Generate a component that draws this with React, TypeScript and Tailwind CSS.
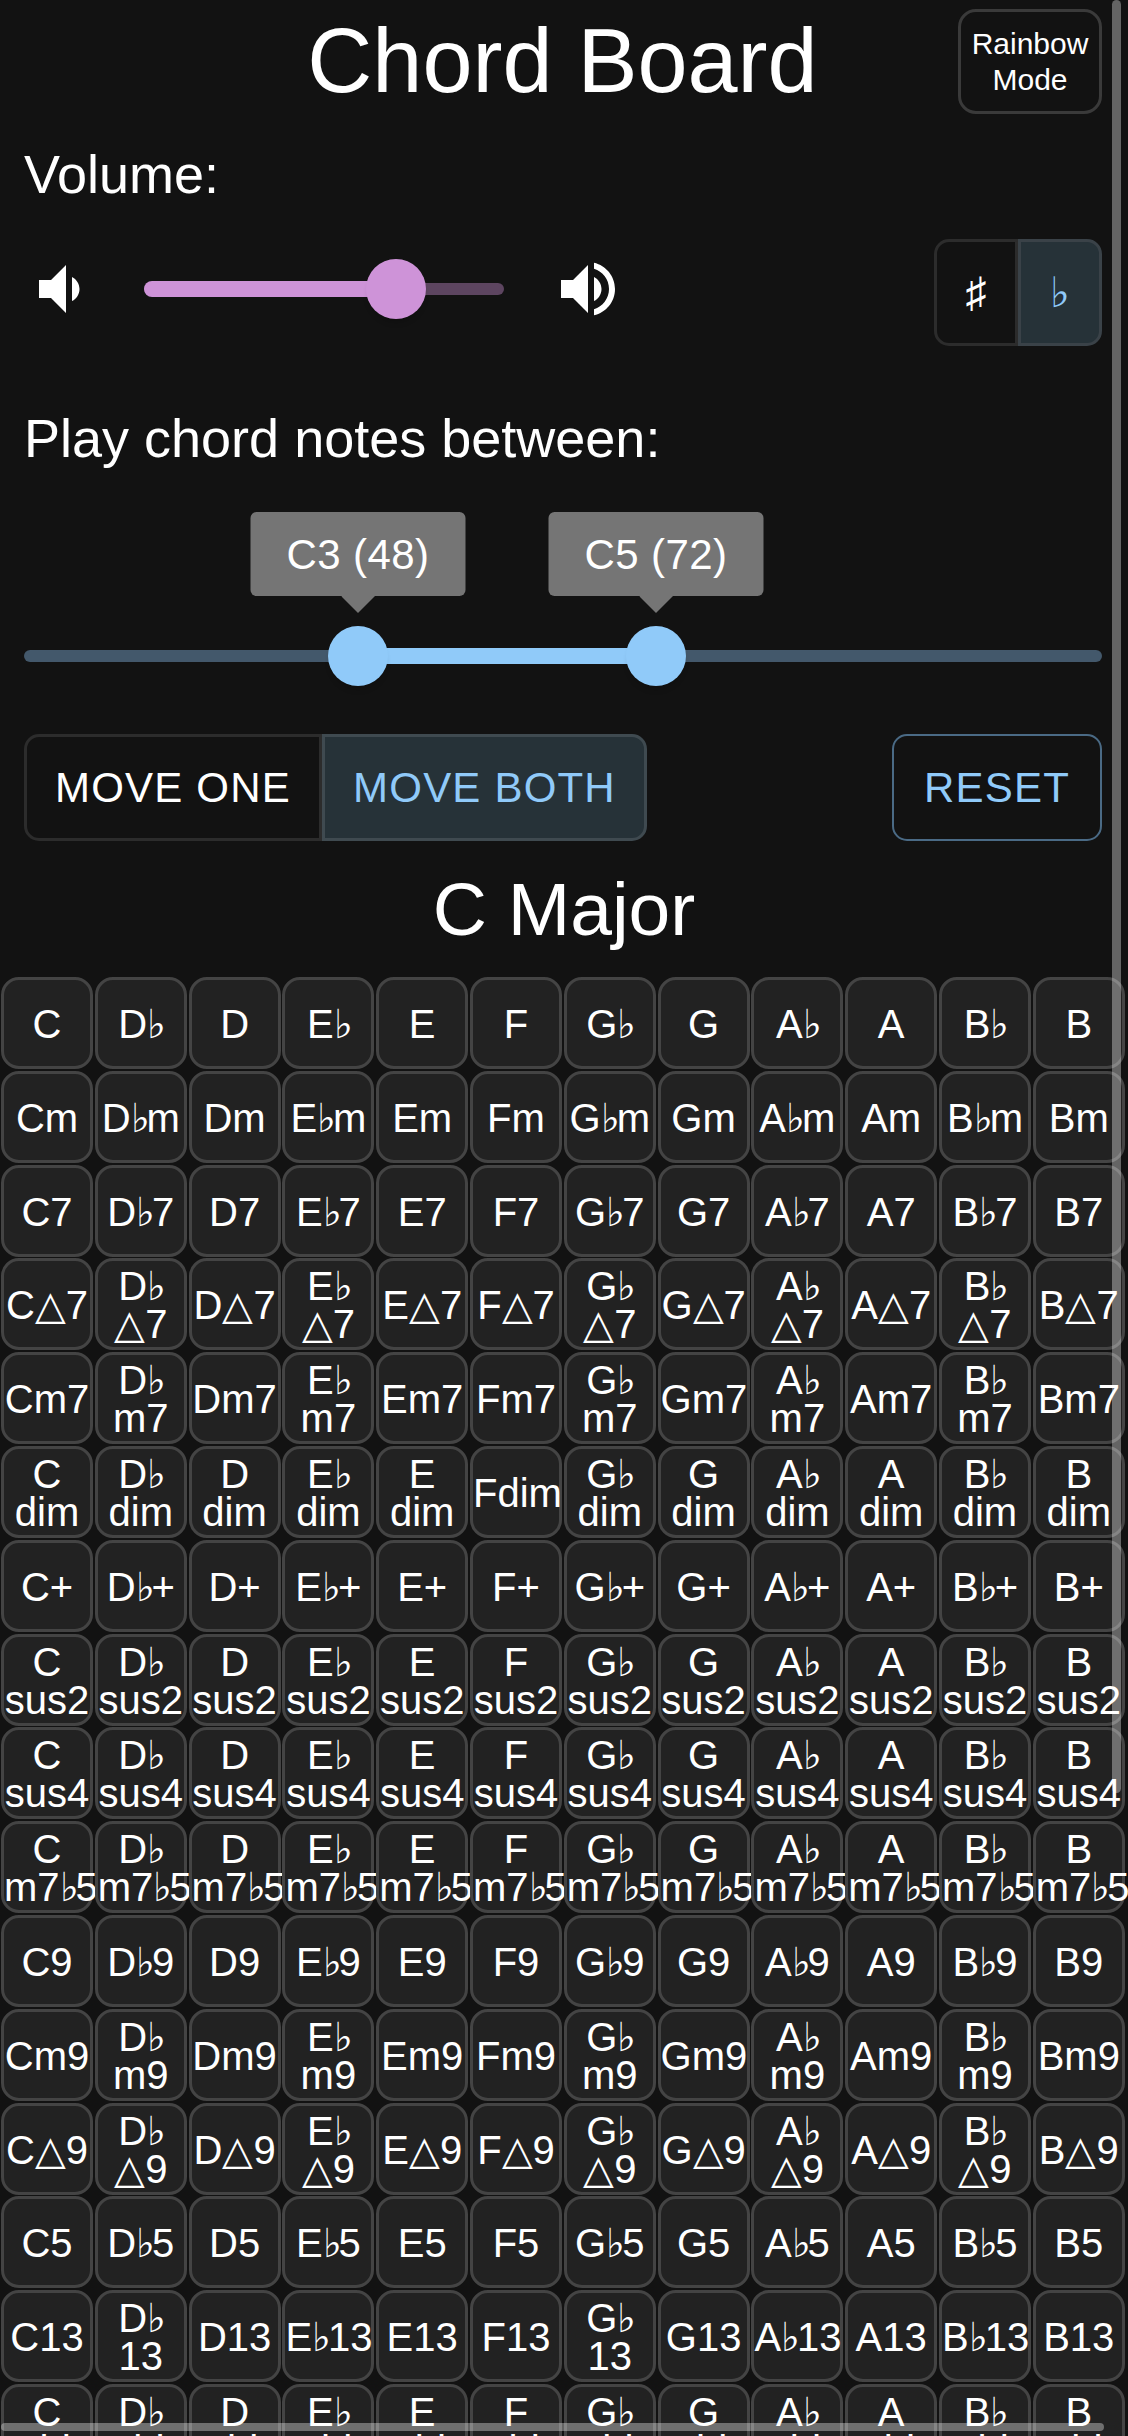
const FLAT = "\u266D";
const SHARP = "\u266F";
const TRI = "\u25B3";

const ROOTS = ["C", `D${FLAT}`, "D", `E${FLAT}`, "E", "F", `G${FLAT}`, "G", `A${FLAT}`, "A", `B${FLAT}`, "B"];

// wrap: which roots push the suffix onto a second line
type Wrap = "none" | "flats" | "all" | "dim" | "thirteen";
const ROWS: { suffix: string; wrap: Wrap }[] = [
  { suffix: "", wrap: "none" },
  { suffix: "m", wrap: "none" },
  { suffix: "7", wrap: "none" },
  { suffix: `${TRI}7`, wrap: "flats" },
  { suffix: "m7", wrap: "flats" },
  { suffix: "dim", wrap: "dim" },
  { suffix: "+", wrap: "none" },
  { suffix: "sus2", wrap: "all" },
  { suffix: "sus4", wrap: "all" },
  { suffix: `m7${FLAT}5`, wrap: "all" },
  { suffix: "9", wrap: "none" },
  { suffix: "m9", wrap: "flats" },
  { suffix: `${TRI}9`, wrap: "flats" },
  { suffix: "5", wrap: "none" },
  { suffix: "13", wrap: "thirteen" },
  { suffix: "add9", wrap: "all" },
];

function shouldWrap(root: string, wrap: Wrap) {
  if (wrap === "all") return true;
  if (wrap === "flats") return root.length > 1;
  if (wrap === "dim") return root !== "F";
  if (wrap === "thirteen") return root === `D${FLAT}` || root === `G${FLAT}`;
  return false;
}

// the fallback flat glyph runs wide, pull the next character back in
function ChordText({ text }: { text: string }) {
  const parts = text.split(FLAT);
  return (
    <>
      {parts.map((part, i) => (
        <span key={i}>
          {i > 0 && <span className="-mr-[3px]">{FLAT}</span>}
          {part}
        </span>
      ))}
    </>
  );
}

function ChordTile({ root, suffix, wrap }: { root: string; suffix: string; wrap: Wrap }) {
  return (
    <button className="flex h-[92px] w-[92px] items-center rounded-[18px] border-[3px] border-[#444444] bg-[#222222] pt-[2px] text-[40px] leading-[38px] text-white">
      <span className="block w-full whitespace-nowrap text-center">
        {shouldWrap(root, wrap) ? (
          <>
            <ChordText text={root} />
            <br />
            <ChordText text={suffix} />
          </>
        ) : (
          <ChordText text={root + suffix} />
        )}
      </span>
    </button>
  );
}

function VolumeDownIcon() {
  return (
    <svg viewBox="0 0 24 24" className="h-[72px] w-[72px] fill-white">
      <path d="M18.5 12c0-1.77-1.02-3.29-2.5-4.03v8.05c1.48-.73 2.5-2.25 2.5-4.02zM5 9v6h4l5 5V4L9 9H5z" />
    </svg>
  );
}

function VolumeUpIcon() {
  return (
    <svg viewBox="0 0 24 24" className="h-[72px] w-[72px] fill-white">
      <path d="M3 9v6h4l5 5V4L7 9H3zm13.5 3c0-1.77-1.02-3.29-2.5-4.03v8.05c1.48-.73 2.5-2.25 2.5-4.02zM14 3.23v2.06c2.89.86 5 3.54 5 6.71s-2.11 5.85-5 6.71v2.06c4.01-.91 7-4.49 7-8.77s-2.99-7.86-7-8.77z" />
    </svg>
  );
}

function Tooltip({ label }: { label: string }) {
  return (
    <div className="absolute bottom-[73px] left-1/2 -translate-x-1/2">
      <div className="flex h-[84px] w-[215px] items-center justify-center rounded-[6px] bg-[#757575] text-[42px] tracking-[0.4px] text-white">
        {label}
      </div>
      <div className="mx-auto h-[17px] w-[34px] bg-[#757575] [clip-path:polygon(0_0,100%_0,50%_100%)]" />
    </div>
  );
}

export default function App() {
  return (
    <div className="relative h-[2436px] w-[1128px] overflow-hidden bg-[#121212] font-['Liberation_Sans',Arial,sans-serif] text-white">
      <header className="grid h-[123px] grid-cols-[1fr_auto_1fr]">
        <div />
        <h1 className="pr-[3px] text-[90px] leading-[123px]">Chord Board</h1>
        <button className="mr-[26px] mt-[9px] h-[105px] w-[144px] justify-self-end rounded-[18px] border-[3px] border-[#3a3a3a] text-[30px] leading-[36px]">
          Rainbow
          <br />
          Mode
        </button>
      </header>

      <section className="px-6">
        <p className="mt-[20px] text-[54px] leading-[62px]">Volume:</p>
        <div className="mt-[26px] flex items-center justify-between">
          <div className="flex h-[72px] w-[600px] items-center">
            <VolumeDownIcon />
            <div className="relative mx-12 h-[60px] w-[360px]">
              <div className="absolute left-0 right-0 top-[24px] h-[12px] rounded-full bg-[#5d4560]" />
              <div className="absolute left-0 top-[22px] h-[16px] w-[252px] rounded-full bg-[#ce93d8]" />
              <div className="absolute left-[222px] top-0 h-[60px] w-[60px] rounded-full bg-[#ce93d8] shadow-[0_6px_6px_-3px_rgba(0,0,0,0.2)]" />
            </div>
            <VolumeUpIcon />
          </div>
          <div className="mr-[2px] mt-[8px] flex h-[107px] w-[168px]">
            <button className="flex-1 rounded-l-[15px] border-[3px] border-[#2c2c2c] text-[42px]">{SHARP}</button>
            <button className="flex-1 rounded-r-[15px] border-[3px] border-[#3a4248] bg-[#263238] text-[42px] text-[#90caf9]">
              {FLAT}
            </button>
          </div>
        </div>
      </section>

      <section className="px-6">
        <p className="mt-[61px] text-[54px] leading-[62px]">Play chord notes between:</p>
        <div className="relative mr-[2px] mt-[157px] h-[60px]">
          <div className="absolute left-0 right-0 top-[24px] h-[12px] rounded-full bg-[#43586b]" />
          <div className="absolute left-[334px] top-[22px] h-[16px] w-[298px] bg-[#90caf9]" />
          <div className="absolute left-[304px] top-0 h-[60px] w-[60px] rounded-full bg-[#90caf9] shadow-[0_6px_6px_-3px_rgba(0,0,0,0.2)]">
            <Tooltip label="C3 (48)" />
          </div>
          <div className="absolute left-[602px] top-0 h-[60px] w-[60px] rounded-full bg-[#90caf9] shadow-[0_6px_6px_-3px_rgba(0,0,0,0.2)]">
            <Tooltip label="C5 (72)" />
          </div>
        </div>
        <div className="mr-[2px] mt-[48px] flex h-[107px] items-stretch justify-between">
          <div className="flex">
            <button className="w-[298px] rounded-l-[15px] border-[3px] border-[#2c2c2c] text-[42px] tracking-[1.2px]">MOVE ONE</button>
            <button className="w-[325px] rounded-r-[15px] border-[3px] border-[#3f4a50] bg-[#263238] text-[42px] tracking-[1.2px] text-[#90caf9]">
              MOVE BOTH
            </button>
          </div>
          <button className="w-[210px] rounded-[15px] border-2 border-[#4a6a85] text-[42px] tracking-[1.2px] text-[#90caf9]">RESET</button>
        </div>
      </section>

      <h2 className="mt-[24px] text-center text-[75px] leading-[88px]">C Major</h2>

      <div className="ml-px mt-[24px] grid grid-cols-[repeat(12,92px)] gap-[1.8px]">
        {ROWS.map((row) =>
          ROOTS.map((root) => <ChordTile key={root + row.suffix} root={root} suffix={row.suffix} wrap={row.wrap} />),
        )}
      </div>

      {/* overlay scrollbars */}
      <div className="pointer-events-none absolute right-[7px] top-0 h-[1793px] w-[9px] rounded-full bg-white/35" />
      <div className="pointer-events-none absolute bottom-[5px] left-px h-[8px] w-[1103px] rounded-full bg-white/35" />
    </div>
  );
}
